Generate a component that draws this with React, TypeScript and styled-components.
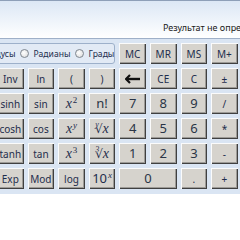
import React from "react";
import styled, { createGlobalStyle } from "styled-components";

const Global = createGlobalStyle`
  html, body { margin: 0; padding: 0; background: #ffffff; }
  body { width: 240px; height: 240px; overflow: hidden; }
`;

const Window = styled.div`
  width: 240px;
  height: 240px;
  overflow: hidden;
  background: #ffffff;
  font-family: "Noto Sans", "Liberation Sans", sans-serif;
`;

const Display = styled.div`
  height: 37px;
  border-top: 1px solid #8e9fb8;
  border-bottom: 1px solid #9fb0c8;
  background: linear-gradient(#dce7f5, #f4f8fc 70%, #ffffff);
  display: flex;
  align-items: flex-end;
  padding-left: 163px;
  overflow: hidden;
`;

const Result = styled.span`
  font-family: "Noto Sans", "Liberation Sans", sans-serif;
  font-size: 9px;
  color: #1a1a1a;
  white-space: nowrap;
  margin-bottom: 4px;
`;

const Pad = styled.div`
  background: #dae5f3;
  margin-left: -3px;
  padding: 4px 0 5px;
  display: grid;
  grid-template-columns: repeat(8, 26.6px);
  grid-auto-rows: 21px;
  gap: 4px;
`;

const Units = styled.div`
  grid-column: span 4;
  border: 1px solid #9db0ca;
  border-radius: 3px;
  background: #e2eaf5;
  display: flex;
  align-items: center;
  justify-content: flex-end;
  gap: 4px;
  padding-right: 0;
  overflow: hidden;
  white-space: nowrap;
  font-family: "Noto Sans", "Liberation Sans", sans-serif;
  font-size: 8.6px;
  color: #1e2f4f;
`;

const Option = styled.span`
  display: flex;
  align-items: center;
  gap: 5px;
`;

const Radio = styled.span`
  width: 7px;
  height: 7px;
  border-radius: 50%;
  border: 1px solid #7f8790;
  background: radial-gradient(circle at 40% 40%, #ffffff, #d8d8d8);
  flex: none;
`;

type Kind = "fn" | "digit" | "math";

const Key = styled.button<{ $span?: number; $kind?: Kind }>`
  grid-column: span ${(p) => p.$span ?? 1};
  margin: 0;
  padding: 0;
  border: none;
  background: #d6d3cd;
  box-shadow: inset 1px 1px 0 #fbfbfb, inset -1px -1px 0 #404040,
    inset -2px -2px 0 #9d9b97;
  text-align: center;
  white-space: nowrap;
  color: ${(p) => (p.$kind === "digit" ? "#2a3546" : "#1e2d4c")};
  font-family: ${(p) =>
    p.$kind === "math"
      ? '"Liberation Serif", "DejaVu Serif", serif'
      : '"Noto Sans", "Liberation Sans", sans-serif'};
  font-size: ${(p) =>
    p.$kind === "digit" ? "13px" : p.$kind === "math" ? "14px" : "10px"};
  font-style: ${(p) => (p.$kind === "math" ? "italic" : "normal")};
  line-height: 1;
`;

const Sup = styled.sup<{ $upright?: boolean }>`
  font-size: 9px;
  vertical-align: 5px;
  line-height: 0;
  margin-left: 1px;
  font-style: ${(p) => (p.$upright ? "normal" : "italic")};
`;

const RootIdx = styled.sup`
  font-size: 8px;
  vertical-align: 6px;
  line-height: 0;
  margin-right: -4px;
`;

const Root = styled.span`
  font-family: "DejaVu Serif", serif;
  font-style: normal;
  font-size: 12px;
`;

const Upright = styled.span`
  font-family: "Noto Sans", "Liberation Sans", sans-serif;
  font-style: normal;
  font-size: 13px;
`;

const BackIcon = styled.svg`
  vertical-align: middle;
`;

const Back = () => (
  <BackIcon width="16" height="10" viewBox="0 0 16 10">
    <path d="M5 1 L1 5 L5 9" fill="none" stroke="#111" strokeWidth="2.2" />
    <path d="M1.5 5 H15" stroke="#111" strokeWidth="2.4" />
  </BackIcon>
);

export default function App() {
  return (
    <Window>
      <Global />
      <Display>
        <Result>Результат не определен</Result>
      </Display>
      <Pad>
        <Units>
          <Option>
            <Radio />
            Градусы
          </Option>
          <Option>
            <Radio />
            Радианы
          </Option>
          <Option>
            <Radio />
            Грады
          </Option>
        </Units>
        <Key>MC</Key>
        <Key>MR</Key>
        <Key>MS</Key>
        <Key>M+</Key>

        <Key>Inv</Key>
        <Key>ln</Key>
        <Key>(</Key>
        <Key>)</Key>
        <Key>
          <Back />
        </Key>
        <Key>CE</Key>
        <Key>C</Key>
        <Key>±</Key>

        <Key>sinh</Key>
        <Key>sin</Key>
        <Key $kind="math">
          x<Sup $upright>2</Sup>
        </Key>
        <Key $kind="digit">n!</Key>
        <Key $kind="digit">7</Key>
        <Key $kind="digit">8</Key>
        <Key $kind="digit">9</Key>
        <Key>/</Key>

        <Key>cosh</Key>
        <Key>cos</Key>
        <Key $kind="math">
          x<Sup>y</Sup>
        </Key>
        <Key $kind="math">
          <RootIdx>y</RootIdx>
          <Root>√</Root>x
        </Key>
        <Key $kind="digit">4</Key>
        <Key $kind="digit">5</Key>
        <Key $kind="digit">6</Key>
        <Key>*</Key>

        <Key>tanh</Key>
        <Key>tan</Key>
        <Key $kind="math">
          x<Sup $upright>3</Sup>
        </Key>
        <Key $kind="math">
          <RootIdx>3</RootIdx>
          <Root>√</Root>x
        </Key>
        <Key $kind="digit">1</Key>
        <Key $kind="digit">2</Key>
        <Key $kind="digit">3</Key>
        <Key>-</Key>

        <Key>Exp</Key>
        <Key>Mod</Key>
        <Key>log</Key>
        <Key $kind="math">
          <Upright>10</Upright>
          <Sup>x</Sup>
        </Key>
        <Key $kind="digit" $span={2}>
          0
        </Key>
        <Key>.</Key>
        <Key>+</Key>
      </Pad>
    </Window>
  );
}
